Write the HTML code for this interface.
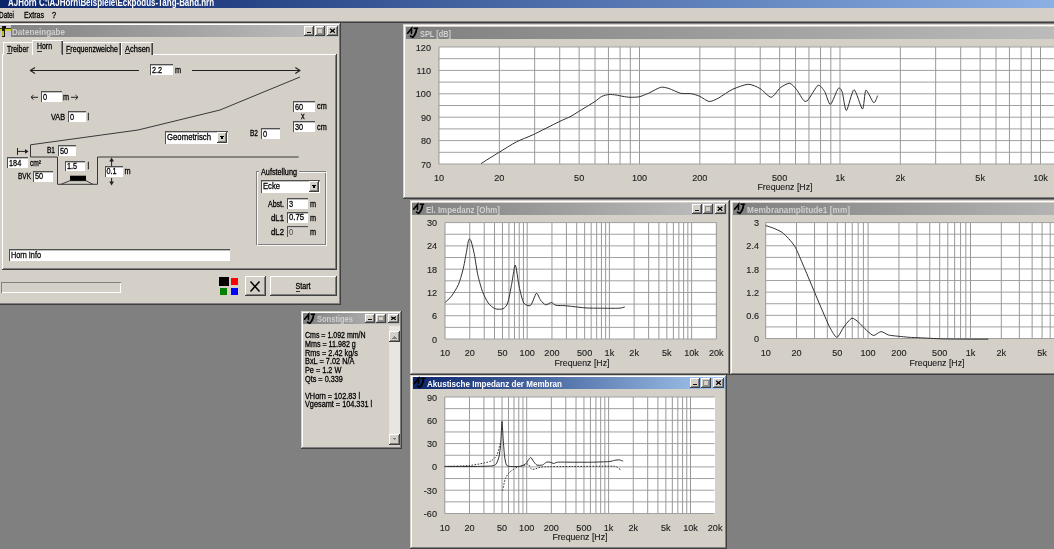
<!DOCTYPE html>
<html><head><meta charset="utf-8"><style>
html,body{margin:0;padding:0;width:1054px;height:549px;overflow:hidden;background:#808080;}

polyline,.s{shape-rendering:geometricPrecision}
text{shape-rendering:auto}
svg{will-change:transform}
</style></head><body>
<svg width="1054" height="549" viewBox="0 0 1054 549" style="display:block" shape-rendering="crispEdges"><defs><linearGradient id="ga" x1="0" x2="1" y1="0" y2="0"><stop offset="0" stop-color="#0A246A"/><stop offset="1" stop-color="#A6CAF0"/></linearGradient><linearGradient id="gi" x1="0" x2="1" y1="0" y2="0"><stop offset="0" stop-color="#808080"/><stop offset="1" stop-color="#C0C0C0"/></linearGradient><linearGradient id="gmain" gradientUnits="userSpaceOnUse" x1="0" x2="1054" y1="0" y2="0"><stop offset="0" stop-color="#0A246A"/><stop offset="1" stop-color="#8AB0E4"/></linearGradient></defs>
<rect x="0" y="0" width="1054" height="549" fill="#808080" />
<rect x="0" y="0" width="1054" height="8" fill="url(#gmain)" />
<text x="8" y="5.59" font-size="11" text-anchor="start" fill="#FFFFFF" font-weight="bold" textLength="206" lengthAdjust="spacingAndGlyphs" font-family="Liberation Sans" >AJHorn  C:\AJHorn\Beispiele\Eckpodus-Tang-Band.hrn</text>
<rect x="0" y="8" width="1054" height="14" fill="#D4D0C8" />
<text x="-1" y="17.97" font-size="8.6" text-anchor="start" fill="#000" textLength="15" lengthAdjust="spacingAndGlyphs" stroke="#000" stroke-width="0.28" font-family="Liberation Sans" >Datei</text>
<text x="24" y="17.97" font-size="8.6" text-anchor="start" fill="#000" textLength="20" lengthAdjust="spacingAndGlyphs" stroke="#000" stroke-width="0.28" font-family="Liberation Sans" >Extras</text>
<text x="52" y="17.97" font-size="8.6" text-anchor="start" fill="#000" textLength="4.1" lengthAdjust="spacingAndGlyphs" stroke="#000" stroke-width="0.28" font-family="Liberation Sans" >?</text>
<rect x="0" y="21" width="1054" height="1" fill="#808080" />
<rect x="0" y="22" width="1054" height="1" fill="#404040" />
<rect x="403" y="24" width="700" height="175" fill="#D4D0C8" />
<rect x="403" y="24" width="700" height="1" fill="#D4D0C8" />
<rect x="403" y="24" width="1" height="175" fill="#D4D0C8" />
<rect x="404" y="25" width="698" height="1" fill="#FFFFFF" />
<rect x="404" y="25" width="1" height="173" fill="#FFFFFF" />
<rect x="403" y="198" width="700" height="1" fill="#404040" />
<rect x="1102" y="24" width="1" height="175" fill="#404040" />
<rect x="404" y="197" width="698" height="1" fill="#808080" />
<rect x="1101" y="25" width="1" height="173" fill="#808080" />
<rect x="406" y="27" width="700" height="12" fill="url(#gi)" />
<g class="s" transform="translate(406,27)" fill="none" stroke="#000" stroke-linecap="round"><path d="M1.6,6.2 L5.6,1.4 L5.4,6.4" stroke-width="1.6"/><path d="M8.2,1.3 L11.6,1.3" stroke-width="1.5"/><path d="M10.6,1.6 C10.2,5 8.6,8.6 6.8,10.3 L4.6,9.3" stroke-width="1.8"/></g>
<text x="420" y="36.58" font-size="9.5" text-anchor="start" fill="#D0D0D0" font-weight="bold" textLength="31" lengthAdjust="spacingAndGlyphs" font-family="Liberation Sans" >SPL [dB]</text>
<rect x="439" y="47" width="663" height="117" fill="#FFFFFF" />
<line x1="439" y1="47.0" x2="1102" y2="47.0" stroke="#A0A0A0" stroke-width="1" class="s"/>
<line x1="439" y1="58.7" x2="1102" y2="58.7" stroke="#A0A0A0" stroke-width="1" class="s"/>
<line x1="439" y1="70.4" x2="1102" y2="70.4" stroke="#A0A0A0" stroke-width="1" class="s"/>
<line x1="439" y1="82.1" x2="1102" y2="82.1" stroke="#A0A0A0" stroke-width="1" class="s"/>
<line x1="439" y1="93.8" x2="1102" y2="93.8" stroke="#A0A0A0" stroke-width="1" class="s"/>
<line x1="439" y1="105.5" x2="1102" y2="105.5" stroke="#A0A0A0" stroke-width="1" class="s"/>
<line x1="439" y1="117.2" x2="1102" y2="117.2" stroke="#A0A0A0" stroke-width="1" class="s"/>
<line x1="439" y1="128.9" x2="1102" y2="128.9" stroke="#A0A0A0" stroke-width="1" class="s"/>
<line x1="439" y1="140.6" x2="1102" y2="140.6" stroke="#A0A0A0" stroke-width="1" class="s"/>
<line x1="439" y1="152.3" x2="1102" y2="152.3" stroke="#A0A0A0" stroke-width="1" class="s"/>
<line x1="439" y1="164.0" x2="1102" y2="164.0" stroke="#A0A0A0" stroke-width="1" class="s"/>
<line x1="439.0" y1="47" x2="439.0" y2="164" stroke="#999999" stroke-width="1" class="s"/>
<line x1="499.3565141306282" y1="47" x2="499.3565141306282" y2="164" stroke="#999999" stroke-width="1" class="s"/>
<line x1="534.6628115712923" y1="47" x2="534.6628115712923" y2="164" stroke="#999999" stroke-width="1" class="s"/>
<line x1="559.7130282612565" y1="47" x2="559.7130282612565" y2="164" stroke="#999999" stroke-width="1" class="s"/>
<line x1="579.1434858693717" y1="47" x2="579.1434858693717" y2="164" stroke="#999999" stroke-width="1" class="s"/>
<line x1="595.0193257019205" y1="47" x2="595.0193257019205" y2="164" stroke="#999999" stroke-width="1" class="s"/>
<line x1="608.4421570228585" y1="47" x2="608.4421570228585" y2="164" stroke="#999999" stroke-width="1" class="s"/>
<line x1="620.0695423918846" y1="47" x2="620.0695423918846" y2="164" stroke="#999999" stroke-width="1" class="s"/>
<line x1="630.3256231425846" y1="47" x2="630.3256231425846" y2="164" stroke="#999999" stroke-width="1" class="s"/>
<line x1="639.5" y1="47" x2="639.5" y2="164" stroke="#999999" stroke-width="1" class="s"/>
<line x1="699.8565141306283" y1="47" x2="699.8565141306283" y2="164" stroke="#999999" stroke-width="1" class="s"/>
<line x1="735.1628115712923" y1="47" x2="735.1628115712923" y2="164" stroke="#999999" stroke-width="1" class="s"/>
<line x1="760.2130282612565" y1="47" x2="760.2130282612565" y2="164" stroke="#999999" stroke-width="1" class="s"/>
<line x1="779.6434858693717" y1="47" x2="779.6434858693717" y2="164" stroke="#999999" stroke-width="1" class="s"/>
<line x1="795.5193257019205" y1="47" x2="795.5193257019205" y2="164" stroke="#999999" stroke-width="1" class="s"/>
<line x1="808.9421570228585" y1="47" x2="808.9421570228585" y2="164" stroke="#999999" stroke-width="1" class="s"/>
<line x1="820.5695423918846" y1="47" x2="820.5695423918846" y2="164" stroke="#999999" stroke-width="1" class="s"/>
<line x1="830.8256231425846" y1="47" x2="830.8256231425846" y2="164" stroke="#999999" stroke-width="1" class="s"/>
<line x1="840.0" y1="47" x2="840.0" y2="164" stroke="#999999" stroke-width="1" class="s"/>
<line x1="900.3565141306283" y1="47" x2="900.3565141306283" y2="164" stroke="#999999" stroke-width="1" class="s"/>
<line x1="935.6628115712924" y1="47" x2="935.6628115712924" y2="164" stroke="#999999" stroke-width="1" class="s"/>
<line x1="960.7130282612565" y1="47" x2="960.7130282612565" y2="164" stroke="#999999" stroke-width="1" class="s"/>
<line x1="980.1434858693717" y1="47" x2="980.1434858693717" y2="164" stroke="#999999" stroke-width="1" class="s"/>
<line x1="996.0193257019205" y1="47" x2="996.0193257019205" y2="164" stroke="#999999" stroke-width="1" class="s"/>
<line x1="1009.4421570228585" y1="47" x2="1009.4421570228585" y2="164" stroke="#999999" stroke-width="1" class="s"/>
<line x1="1021.0695423918847" y1="47" x2="1021.0695423918847" y2="164" stroke="#999999" stroke-width="1" class="s"/>
<line x1="1031.3256231425846" y1="47" x2="1031.3256231425846" y2="164" stroke="#999999" stroke-width="1" class="s"/>
<line x1="1040.5" y1="47" x2="1040.5" y2="164" stroke="#999999" stroke-width="1" class="s"/>
<line x1="1100.8565141306283" y1="47" x2="1100.8565141306283" y2="164" stroke="#999999" stroke-width="1" class="s"/>
<text x="431" y="50.54" font-size="9.1" text-anchor="end" fill="#202020" stroke="#202020" stroke-width="0.12" font-family="Liberation Sans" >120</text>
<text x="431" y="62.24" font-size="9.1" text-anchor="end" fill="#202020" stroke="#202020" stroke-width="0.12" font-family="Liberation Sans" ></text>
<text x="431" y="73.94" font-size="9.1" text-anchor="end" fill="#202020" stroke="#202020" stroke-width="0.12" font-family="Liberation Sans" >110</text>
<text x="431" y="85.64" font-size="9.1" text-anchor="end" fill="#202020" stroke="#202020" stroke-width="0.12" font-family="Liberation Sans" ></text>
<text x="431" y="97.34" font-size="9.1" text-anchor="end" fill="#202020" stroke="#202020" stroke-width="0.12" font-family="Liberation Sans" >100</text>
<text x="431" y="109.04" font-size="9.1" text-anchor="end" fill="#202020" stroke="#202020" stroke-width="0.12" font-family="Liberation Sans" ></text>
<text x="431" y="120.74" font-size="9.1" text-anchor="end" fill="#202020" stroke="#202020" stroke-width="0.12" font-family="Liberation Sans" >90</text>
<text x="431" y="132.44" font-size="9.1" text-anchor="end" fill="#202020" stroke="#202020" stroke-width="0.12" font-family="Liberation Sans" ></text>
<text x="431" y="144.14" font-size="9.1" text-anchor="end" fill="#202020" stroke="#202020" stroke-width="0.12" font-family="Liberation Sans" >80</text>
<text x="431" y="155.84" font-size="9.1" text-anchor="end" fill="#202020" stroke="#202020" stroke-width="0.12" font-family="Liberation Sans" ></text>
<text x="431" y="167.54" font-size="9.1" text-anchor="end" fill="#202020" stroke="#202020" stroke-width="0.12" font-family="Liberation Sans" >70</text>
<text x="439.0" y="180.54" font-size="9.1" text-anchor="middle" fill="#202020" stroke="#202020" stroke-width="0.12" font-family="Liberation Sans" >10</text>
<text x="499.3565141306282" y="180.54" font-size="9.1" text-anchor="middle" fill="#202020" stroke="#202020" stroke-width="0.12" font-family="Liberation Sans" >20</text>
<text x="579.1434858693717" y="180.54" font-size="9.1" text-anchor="middle" fill="#202020" stroke="#202020" stroke-width="0.12" font-family="Liberation Sans" >50</text>
<text x="639.5" y="180.54" font-size="9.1" text-anchor="middle" fill="#202020" stroke="#202020" stroke-width="0.12" font-family="Liberation Sans" >100</text>
<text x="699.8565141306283" y="180.54" font-size="9.1" text-anchor="middle" fill="#202020" stroke="#202020" stroke-width="0.12" font-family="Liberation Sans" >200</text>
<text x="779.6434858693717" y="180.54" font-size="9.1" text-anchor="middle" fill="#202020" stroke="#202020" stroke-width="0.12" font-family="Liberation Sans" >500</text>
<text x="840.0" y="180.54" font-size="9.1" text-anchor="middle" fill="#202020" stroke="#202020" stroke-width="0.12" font-family="Liberation Sans" >1k</text>
<text x="900.3565141306283" y="180.54" font-size="9.1" text-anchor="middle" fill="#202020" stroke="#202020" stroke-width="0.12" font-family="Liberation Sans" >2k</text>
<text x="980.1434858693717" y="180.54" font-size="9.1" text-anchor="middle" fill="#202020" stroke="#202020" stroke-width="0.12" font-family="Liberation Sans" >5k</text>
<text x="1040.5" y="180.54" font-size="9.1" text-anchor="middle" fill="#202020" stroke="#202020" stroke-width="0.12" font-family="Liberation Sans" >10k</text>
<text x="1100.8565141306283" y="180.54" font-size="9.1" text-anchor="middle" fill="#202020" stroke="#202020" stroke-width="0.12" font-family="Liberation Sans" >20k</text>
<text x="785" y="190.40" font-size="8.4" text-anchor="middle" fill="#202020" textLength="55" lengthAdjust="spacingAndGlyphs" stroke="#202020" stroke-width="0.12" font-family="Liberation Sans" >Frequenz [Hz]</text>
<path d="M481.0,163.6 C483.1,162.3 494.5,155.1 498.8,152.5 C503.1,149.9 512.4,143.9 516.5,141.8 C520.6,139.7 528.0,137.1 533.1,134.7 C538.2,132.3 554.6,123.9 559.1,121.7 C563.6,119.5 568.7,117.5 571.0,116.3 C573.3,115.1 575.8,113.2 578.6,111.5 C581.4,109.8 591.4,103.8 594.2,102.0 C597.0,100.2 600.0,97.3 601.8,96.4 C603.6,95.5 607.2,94.7 608.9,94.5 C610.6,94.3 614.3,94.8 616.0,95.0 C617.7,95.2 621.3,96.1 623.0,96.4 C624.7,96.7 628.3,97.3 630.2,97.3 C632.1,97.3 637.2,97.2 639.2,96.8 C641.2,96.4 645.5,94.5 646.8,94.0 C648.1,93.5 648.3,93.3 650.0,92.5 C651.7,91.7 658.4,87.8 660.7,87.3 C663.0,86.8 666.5,87.8 668.9,88.5 C671.3,89.2 678.1,92.7 680.8,93.3 C683.5,93.9 689.1,93.3 691.4,93.7 C693.7,94.1 697.6,95.4 699.7,96.3 C701.8,97.2 706.9,101.3 709.2,101.5 C711.5,101.7 715.8,99.5 718.6,98.0 C721.4,96.5 729.2,90.8 732.8,89.2 C736.4,87.6 744.9,84.4 748.2,84.3 C751.5,84.2 757.2,86.9 760.0,88.5 C762.8,90.1 768.8,97.4 771.2,97.3 C773.6,97.2 778.0,89.5 780.2,87.8 C782.4,86.1 787.6,83.1 789.6,83.3 C791.6,83.5 795.0,87.6 796.7,89.7 C798.4,91.8 802.4,99.4 803.8,100.6 C805.2,101.8 806.4,101.7 808.1,99.9 C809.8,98.1 816.0,86.4 818.0,85.4 C820.0,84.4 823.2,89.3 824.7,91.6 C826.2,93.9 828.8,104.8 830.4,104.4 C832.0,104.0 836.8,90.0 838.2,88.5 C839.6,87.0 841.2,89.5 842.2,92.1 C843.2,94.7 845.0,110.8 846.4,110.5 C847.8,110.2 852.1,89.9 854.0,89.7 C855.9,89.5 861.1,109.0 862.5,109.1 C863.9,109.2 864.6,91.0 865.9,90.2 C867.2,89.4 872.3,102.1 873.7,102.7 C875.1,103.3 877.2,96.5 877.7,95.6" fill="none" stroke="#303030" stroke-width="1.0" class="s" />
<rect x="410" y="200" width="320" height="175" fill="#D4D0C8" />
<rect x="410" y="200" width="320" height="1" fill="#D4D0C8" />
<rect x="410" y="200" width="1" height="175" fill="#D4D0C8" />
<rect x="411" y="201" width="318" height="1" fill="#FFFFFF" />
<rect x="411" y="201" width="1" height="173" fill="#FFFFFF" />
<rect x="410" y="374" width="320" height="1" fill="#404040" />
<rect x="729" y="200" width="1" height="175" fill="#404040" />
<rect x="411" y="373" width="318" height="1" fill="#808080" />
<rect x="728" y="201" width="1" height="173" fill="#808080" />
<rect x="412" y="203" width="314.5" height="12" fill="url(#gi)" />
<g class="s" transform="translate(412,203)" fill="none" stroke="#000" stroke-linecap="round"><path d="M1.6,6.2 L5.6,1.4 L5.4,6.4" stroke-width="1.6"/><path d="M8.2,1.3 L11.6,1.3" stroke-width="1.5"/><path d="M10.6,1.6 C10.2,5 8.6,8.6 6.8,10.3 L4.6,9.3" stroke-width="1.8"/></g>
<text x="426" y="212.58" font-size="9.5" text-anchor="start" fill="#D0D0D0" font-weight="bold" textLength="74" lengthAdjust="spacingAndGlyphs" font-family="Liberation Sans" >El. Impedanz [Ohm]</text>
<rect x="691.5" y="204" width="10" height="10" fill="#D4D0C8" />
<rect x="691.5" y="204" width="10" height="1" fill="#FFFFFF" />
<rect x="691.5" y="204" width="1" height="10" fill="#FFFFFF" />
<rect x="691.5" y="213" width="10" height="1" fill="#404040" />
<rect x="700.5" y="204" width="1" height="10" fill="#404040" />
<rect x="692.5" y="212" width="8" height="1" fill="#808080" />
<rect x="699.5" y="205" width="1" height="8" fill="#808080" />
<rect x="694.5" y="210" width="4" height="1.2" fill="#101010" />
<rect x="702.5" y="204" width="10" height="10" fill="#D4D0C8" />
<rect x="702.5" y="204" width="10" height="1" fill="#FFFFFF" />
<rect x="702.5" y="204" width="1" height="10" fill="#FFFFFF" />
<rect x="702.5" y="213" width="10" height="1" fill="#404040" />
<rect x="711.5" y="204" width="1" height="10" fill="#404040" />
<rect x="703.5" y="212" width="8" height="1" fill="#808080" />
<rect x="710.5" y="205" width="1" height="8" fill="#808080" />
<rect x="705.0" y="206.5" width="5" height="4.5" fill="none" stroke="#909090" stroke-width="1"/>
<rect x="714.5" y="204" width="11" height="10" fill="#D4D0C8" />
<rect x="714.5" y="204" width="11" height="1" fill="#FFFFFF" />
<rect x="714.5" y="204" width="1" height="10" fill="#FFFFFF" />
<rect x="714.5" y="213" width="11" height="1" fill="#404040" />
<rect x="724.5" y="204" width="1" height="10" fill="#404040" />
<rect x="715.5" y="212" width="9" height="1" fill="#808080" />
<rect x="723.5" y="205" width="1" height="8" fill="#808080" />
<g class="s"><line x1="717.7" y1="206.7" x2="722.3" y2="210.7" stroke="#000" stroke-width="1.3"/><line x1="722.3" y1="206.7" x2="717.7" y2="210.7" stroke="#000" stroke-width="1.3"/></g>
<rect x="445" y="222.6" width="271.29999999999995" height="116.4" fill="#FFFFFF" />
<line x1="445" y1="222.6" x2="716.3" y2="222.6" stroke="#A0A0A0" stroke-width="1" class="s"/>
<line x1="445" y1="234.24" x2="716.3" y2="234.24" stroke="#A0A0A0" stroke-width="1" class="s"/>
<line x1="445" y1="245.88" x2="716.3" y2="245.88" stroke="#A0A0A0" stroke-width="1" class="s"/>
<line x1="445" y1="257.52" x2="716.3" y2="257.52" stroke="#A0A0A0" stroke-width="1" class="s"/>
<line x1="445" y1="269.15999999999997" x2="716.3" y2="269.15999999999997" stroke="#A0A0A0" stroke-width="1" class="s"/>
<line x1="445" y1="280.8" x2="716.3" y2="280.8" stroke="#A0A0A0" stroke-width="1" class="s"/>
<line x1="445" y1="292.44" x2="716.3" y2="292.44" stroke="#A0A0A0" stroke-width="1" class="s"/>
<line x1="445" y1="304.08" x2="716.3" y2="304.08" stroke="#A0A0A0" stroke-width="1" class="s"/>
<line x1="445" y1="315.72" x2="716.3" y2="315.72" stroke="#A0A0A0" stroke-width="1" class="s"/>
<line x1="445" y1="327.36" x2="716.3" y2="327.36" stroke="#A0A0A0" stroke-width="1" class="s"/>
<line x1="445" y1="339.0" x2="716.3" y2="339.0" stroke="#A0A0A0" stroke-width="1" class="s"/>
<line x1="445.0" y1="222.6" x2="445.0" y2="339" stroke="#999999" stroke-width="1" class="s"/>
<line x1="469.74466564357925" y1="222.6" x2="469.74466564357925" y2="339" stroke="#999999" stroke-width="1" class="s"/>
<line x1="484.2193671379563" y1="222.6" x2="484.2193671379563" y2="339" stroke="#999999" stroke-width="1" class="s"/>
<line x1="494.4893312871585" y1="222.6" x2="494.4893312871585" y2="339" stroke="#999999" stroke-width="1" class="s"/>
<line x1="502.45533435642074" y1="222.6" x2="502.45533435642074" y2="339" stroke="#999999" stroke-width="1" class="s"/>
<line x1="508.9640327815355" y1="222.6" x2="508.9640327815355" y2="339" stroke="#999999" stroke-width="1" class="s"/>
<line x1="514.4670588891719" y1="222.6" x2="514.4670588891719" y2="339" stroke="#999999" stroke-width="1" class="s"/>
<line x1="519.2339969307377" y1="222.6" x2="519.2339969307377" y2="339" stroke="#999999" stroke-width="1" class="s"/>
<line x1="523.4387342759126" y1="222.6" x2="523.4387342759126" y2="339" stroke="#999999" stroke-width="1" class="s"/>
<line x1="527.2" y1="222.6" x2="527.2" y2="339" stroke="#999999" stroke-width="1" class="s"/>
<line x1="551.9446656435792" y1="222.6" x2="551.9446656435792" y2="339" stroke="#999999" stroke-width="1" class="s"/>
<line x1="566.4193671379562" y1="222.6" x2="566.4193671379562" y2="339" stroke="#999999" stroke-width="1" class="s"/>
<line x1="576.6893312871586" y1="222.6" x2="576.6893312871586" y2="339" stroke="#999999" stroke-width="1" class="s"/>
<line x1="584.6553343564208" y1="222.6" x2="584.6553343564208" y2="339" stroke="#999999" stroke-width="1" class="s"/>
<line x1="591.1640327815355" y1="222.6" x2="591.1640327815355" y2="339" stroke="#999999" stroke-width="1" class="s"/>
<line x1="596.6670588891719" y1="222.6" x2="596.6670588891719" y2="339" stroke="#999999" stroke-width="1" class="s"/>
<line x1="601.4339969307377" y1="222.6" x2="601.4339969307377" y2="339" stroke="#999999" stroke-width="1" class="s"/>
<line x1="605.6387342759125" y1="222.6" x2="605.6387342759125" y2="339" stroke="#999999" stroke-width="1" class="s"/>
<line x1="609.4" y1="222.6" x2="609.4" y2="339" stroke="#999999" stroke-width="1" class="s"/>
<line x1="634.1446656435793" y1="222.6" x2="634.1446656435793" y2="339" stroke="#999999" stroke-width="1" class="s"/>
<line x1="648.6193671379563" y1="222.6" x2="648.6193671379563" y2="339" stroke="#999999" stroke-width="1" class="s"/>
<line x1="658.8893312871585" y1="222.6" x2="658.8893312871585" y2="339" stroke="#999999" stroke-width="1" class="s"/>
<line x1="666.8553343564207" y1="222.6" x2="666.8553343564207" y2="339" stroke="#999999" stroke-width="1" class="s"/>
<line x1="673.3640327815355" y1="222.6" x2="673.3640327815355" y2="339" stroke="#999999" stroke-width="1" class="s"/>
<line x1="678.8670588891719" y1="222.6" x2="678.8670588891719" y2="339" stroke="#999999" stroke-width="1" class="s"/>
<line x1="683.6339969307378" y1="222.6" x2="683.6339969307378" y2="339" stroke="#999999" stroke-width="1" class="s"/>
<line x1="687.8387342759125" y1="222.6" x2="687.8387342759125" y2="339" stroke="#999999" stroke-width="1" class="s"/>
<line x1="691.6" y1="222.6" x2="691.6" y2="339" stroke="#999999" stroke-width="1" class="s"/>
<line x1="716.3446656435792" y1="222.6" x2="716.3446656435792" y2="339" stroke="#999999" stroke-width="1" class="s"/>
<text x="437" y="226.14" font-size="9.1" text-anchor="end" fill="#202020" stroke="#202020" stroke-width="0.12" font-family="Liberation Sans" >30</text>
<text x="437" y="237.78" font-size="9.1" text-anchor="end" fill="#202020" stroke="#202020" stroke-width="0.12" font-family="Liberation Sans" ></text>
<text x="437" y="249.42" font-size="9.1" text-anchor="end" fill="#202020" stroke="#202020" stroke-width="0.12" font-family="Liberation Sans" >24</text>
<text x="437" y="261.06" font-size="9.1" text-anchor="end" fill="#202020" stroke="#202020" stroke-width="0.12" font-family="Liberation Sans" ></text>
<text x="437" y="272.70" font-size="9.1" text-anchor="end" fill="#202020" stroke="#202020" stroke-width="0.12" font-family="Liberation Sans" >18</text>
<text x="437" y="284.34" font-size="9.1" text-anchor="end" fill="#202020" stroke="#202020" stroke-width="0.12" font-family="Liberation Sans" ></text>
<text x="437" y="295.98" font-size="9.1" text-anchor="end" fill="#202020" stroke="#202020" stroke-width="0.12" font-family="Liberation Sans" >12</text>
<text x="437" y="307.62" font-size="9.1" text-anchor="end" fill="#202020" stroke="#202020" stroke-width="0.12" font-family="Liberation Sans" ></text>
<text x="437" y="319.26" font-size="9.1" text-anchor="end" fill="#202020" stroke="#202020" stroke-width="0.12" font-family="Liberation Sans" >6</text>
<text x="437" y="330.90" font-size="9.1" text-anchor="end" fill="#202020" stroke="#202020" stroke-width="0.12" font-family="Liberation Sans" ></text>
<text x="437" y="342.54" font-size="9.1" text-anchor="end" fill="#202020" stroke="#202020" stroke-width="0.12" font-family="Liberation Sans" >0</text>
<text x="445.0" y="355.54" font-size="9.1" text-anchor="middle" fill="#202020" stroke="#202020" stroke-width="0.12" font-family="Liberation Sans" >10</text>
<text x="469.74466564357925" y="355.54" font-size="9.1" text-anchor="middle" fill="#202020" stroke="#202020" stroke-width="0.12" font-family="Liberation Sans" >20</text>
<text x="502.45533435642074" y="355.54" font-size="9.1" text-anchor="middle" fill="#202020" stroke="#202020" stroke-width="0.12" font-family="Liberation Sans" >50</text>
<text x="527.2" y="355.54" font-size="9.1" text-anchor="middle" fill="#202020" stroke="#202020" stroke-width="0.12" font-family="Liberation Sans" >100</text>
<text x="551.9446656435792" y="355.54" font-size="9.1" text-anchor="middle" fill="#202020" stroke="#202020" stroke-width="0.12" font-family="Liberation Sans" >200</text>
<text x="584.6553343564208" y="355.54" font-size="9.1" text-anchor="middle" fill="#202020" stroke="#202020" stroke-width="0.12" font-family="Liberation Sans" >500</text>
<text x="609.4" y="355.54" font-size="9.1" text-anchor="middle" fill="#202020" stroke="#202020" stroke-width="0.12" font-family="Liberation Sans" >1k</text>
<text x="634.1446656435793" y="355.54" font-size="9.1" text-anchor="middle" fill="#202020" stroke="#202020" stroke-width="0.12" font-family="Liberation Sans" >2k</text>
<text x="666.8553343564207" y="355.54" font-size="9.1" text-anchor="middle" fill="#202020" stroke="#202020" stroke-width="0.12" font-family="Liberation Sans" >5k</text>
<text x="691.6" y="355.54" font-size="9.1" text-anchor="middle" fill="#202020" stroke="#202020" stroke-width="0.12" font-family="Liberation Sans" >10k</text>
<text x="716.3446656435792" y="355.54" font-size="9.1" text-anchor="middle" fill="#202020" stroke="#202020" stroke-width="0.12" font-family="Liberation Sans" >20k</text>
<text x="582" y="365.90" font-size="8.4" text-anchor="middle" fill="#202020" textLength="55" lengthAdjust="spacingAndGlyphs" stroke="#202020" stroke-width="0.12" font-family="Liberation Sans" >Frequenz [Hz]</text>
<path d="M445.1,302.5 C445.9,301.7 449.9,298.2 451.5,296.1 C453.1,294.0 457.0,287.8 458.4,284.6 C459.8,281.4 462.0,273.6 463.0,269.7 C464.0,265.8 465.7,256.0 466.4,252.4 C467.1,248.8 468.1,241.2 468.7,239.8 C469.3,238.4 470.3,239.2 471.0,241.0 C471.7,242.8 473.6,250.6 474.4,254.7 C475.2,258.8 476.9,271.0 477.9,275.4 C478.9,279.8 481.3,288.2 482.5,291.5 C483.7,294.8 486.7,300.9 488.2,303.0 C489.7,305.1 493.3,308.0 495.1,308.7 C496.9,309.4 501.6,309.4 503.1,308.7 C504.6,308.0 506.7,305.9 507.7,303.0 C508.7,300.1 510.7,289.1 511.6,284.6 C512.5,280.1 514.4,264.8 515.3,265.1 C516.2,265.4 518.2,282.4 519.2,286.9 C520.2,291.4 522.4,300.8 523.8,303.0 C525.2,305.2 529.2,306.5 530.7,305.3 C532.2,304.1 535.2,293.9 536.4,293.3 C537.6,292.7 539.5,298.8 540.6,300.2 C541.7,301.6 544.3,304.5 545.6,304.8 C546.9,305.1 550.2,302.4 551.4,302.5 C552.6,302.6 554.4,304.9 556.0,305.3 C557.6,305.7 562.5,305.5 565.1,305.7 C567.7,305.9 575.2,306.8 577.8,307.1 C580.4,307.4 584.3,307.9 587.0,308.0 C589.7,308.1 596.8,308.2 600.7,308.2 C604.6,308.2 616.2,308.4 619.1,308.2 C622.0,308.0 624.1,307.1 624.8,306.9" fill="none" stroke="#303030" stroke-width="1.0" class="s" />
<rect x="730" y="200" width="400" height="175" fill="#D4D0C8" />
<rect x="730" y="200" width="400" height="1" fill="#D4D0C8" />
<rect x="730" y="200" width="1" height="175" fill="#D4D0C8" />
<rect x="731" y="201" width="398" height="1" fill="#FFFFFF" />
<rect x="731" y="201" width="1" height="173" fill="#FFFFFF" />
<rect x="730" y="374" width="400" height="1" fill="#404040" />
<rect x="1129" y="200" width="1" height="175" fill="#404040" />
<rect x="731" y="373" width="398" height="1" fill="#808080" />
<rect x="1128" y="201" width="1" height="173" fill="#808080" />
<rect x="733" y="203" width="400" height="12" fill="url(#gi)" />
<g class="s" transform="translate(733,203)" fill="none" stroke="#000" stroke-linecap="round"><path d="M1.6,6.2 L5.6,1.4 L5.4,6.4" stroke-width="1.6"/><path d="M8.2,1.3 L11.6,1.3" stroke-width="1.5"/><path d="M10.6,1.6 C10.2,5 8.6,8.6 6.8,10.3 L4.6,9.3" stroke-width="1.8"/></g>
<text x="747" y="212.58" font-size="9.5" text-anchor="start" fill="#D0D0D0" font-weight="bold" textLength="103" lengthAdjust="spacingAndGlyphs" font-family="Liberation Sans" >Membranamplitude1 [mm]</text>
<rect x="765.7" y="222.6" width="337.29999999999995" height="115.9" fill="#FFFFFF" />
<line x1="765.7" y1="222.6" x2="1103" y2="222.6" stroke="#A0A0A0" stroke-width="1" class="s"/>
<line x1="765.7" y1="234.19" x2="1103" y2="234.19" stroke="#A0A0A0" stroke-width="1" class="s"/>
<line x1="765.7" y1="245.78" x2="1103" y2="245.78" stroke="#A0A0A0" stroke-width="1" class="s"/>
<line x1="765.7" y1="257.37" x2="1103" y2="257.37" stroke="#A0A0A0" stroke-width="1" class="s"/>
<line x1="765.7" y1="268.96" x2="1103" y2="268.96" stroke="#A0A0A0" stroke-width="1" class="s"/>
<line x1="765.7" y1="280.55" x2="1103" y2="280.55" stroke="#A0A0A0" stroke-width="1" class="s"/>
<line x1="765.7" y1="292.14" x2="1103" y2="292.14" stroke="#A0A0A0" stroke-width="1" class="s"/>
<line x1="765.7" y1="303.73" x2="1103" y2="303.73" stroke="#A0A0A0" stroke-width="1" class="s"/>
<line x1="765.7" y1="315.32" x2="1103" y2="315.32" stroke="#A0A0A0" stroke-width="1" class="s"/>
<line x1="765.7" y1="326.91" x2="1103" y2="326.91" stroke="#A0A0A0" stroke-width="1" class="s"/>
<line x1="765.7" y1="338.5" x2="1103" y2="338.5" stroke="#A0A0A0" stroke-width="1" class="s"/>
<line x1="765.7" y1="222.6" x2="765.7" y2="338.5" stroke="#999999" stroke-width="1" class="s"/>
<line x1="796.5254715559918" y1="222.6" x2="796.5254715559918" y2="338.5" stroke="#999999" stroke-width="1" class="s"/>
<line x1="814.5572164832935" y1="222.6" x2="814.5572164832935" y2="338.5" stroke="#999999" stroke-width="1" class="s"/>
<line x1="827.3509431119834" y1="222.6" x2="827.3509431119834" y2="338.5" stroke="#999999" stroke-width="1" class="s"/>
<line x1="837.2745284440084" y1="222.6" x2="837.2745284440084" y2="338.5" stroke="#999999" stroke-width="1" class="s"/>
<line x1="845.3826880392852" y1="222.6" x2="845.3826880392852" y2="338.5" stroke="#999999" stroke-width="1" class="s"/>
<line x1="852.23803929746" y1="222.6" x2="852.23803929746" y2="338.5" stroke="#999999" stroke-width="1" class="s"/>
<line x1="858.1764146679751" y1="222.6" x2="858.1764146679751" y2="338.5" stroke="#999999" stroke-width="1" class="s"/>
<line x1="863.4144329665869" y1="222.6" x2="863.4144329665869" y2="338.5" stroke="#999999" stroke-width="1" class="s"/>
<line x1="868.1" y1="222.6" x2="868.1" y2="338.5" stroke="#999999" stroke-width="1" class="s"/>
<line x1="898.9254715559917" y1="222.6" x2="898.9254715559917" y2="338.5" stroke="#999999" stroke-width="1" class="s"/>
<line x1="916.9572164832935" y1="222.6" x2="916.9572164832935" y2="338.5" stroke="#999999" stroke-width="1" class="s"/>
<line x1="929.7509431119834" y1="222.6" x2="929.7509431119834" y2="338.5" stroke="#999999" stroke-width="1" class="s"/>
<line x1="939.6745284440084" y1="222.6" x2="939.6745284440084" y2="338.5" stroke="#999999" stroke-width="1" class="s"/>
<line x1="947.7826880392852" y1="222.6" x2="947.7826880392852" y2="338.5" stroke="#999999" stroke-width="1" class="s"/>
<line x1="954.63803929746" y1="222.6" x2="954.63803929746" y2="338.5" stroke="#999999" stroke-width="1" class="s"/>
<line x1="960.5764146679751" y1="222.6" x2="960.5764146679751" y2="338.5" stroke="#999999" stroke-width="1" class="s"/>
<line x1="965.8144329665869" y1="222.6" x2="965.8144329665869" y2="338.5" stroke="#999999" stroke-width="1" class="s"/>
<line x1="970.5" y1="222.6" x2="970.5" y2="338.5" stroke="#999999" stroke-width="1" class="s"/>
<line x1="1001.3254715559917" y1="222.6" x2="1001.3254715559917" y2="338.5" stroke="#999999" stroke-width="1" class="s"/>
<line x1="1019.3572164832935" y1="222.6" x2="1019.3572164832935" y2="338.5" stroke="#999999" stroke-width="1" class="s"/>
<line x1="1032.1509431119835" y1="222.6" x2="1032.1509431119835" y2="338.5" stroke="#999999" stroke-width="1" class="s"/>
<line x1="1042.0745284440084" y1="222.6" x2="1042.0745284440084" y2="338.5" stroke="#999999" stroke-width="1" class="s"/>
<line x1="1050.182688039285" y1="222.6" x2="1050.182688039285" y2="338.5" stroke="#999999" stroke-width="1" class="s"/>
<line x1="1057.03803929746" y1="222.6" x2="1057.03803929746" y2="338.5" stroke="#999999" stroke-width="1" class="s"/>
<line x1="1062.9764146679752" y1="222.6" x2="1062.9764146679752" y2="338.5" stroke="#999999" stroke-width="1" class="s"/>
<line x1="1068.2144329665869" y1="222.6" x2="1068.2144329665869" y2="338.5" stroke="#999999" stroke-width="1" class="s"/>
<line x1="1072.9" y1="222.6" x2="1072.9" y2="338.5" stroke="#999999" stroke-width="1" class="s"/>
<text x="759" y="226.14" font-size="9.1" text-anchor="end" fill="#202020" stroke="#202020" stroke-width="0.12" font-family="Liberation Sans" >3</text>
<text x="759" y="237.73" font-size="9.1" text-anchor="end" fill="#202020" stroke="#202020" stroke-width="0.12" font-family="Liberation Sans" ></text>
<text x="759" y="249.32" font-size="9.1" text-anchor="end" fill="#202020" stroke="#202020" stroke-width="0.12" font-family="Liberation Sans" >2.4</text>
<text x="759" y="260.91" font-size="9.1" text-anchor="end" fill="#202020" stroke="#202020" stroke-width="0.12" font-family="Liberation Sans" ></text>
<text x="759" y="272.50" font-size="9.1" text-anchor="end" fill="#202020" stroke="#202020" stroke-width="0.12" font-family="Liberation Sans" >1.8</text>
<text x="759" y="284.09" font-size="9.1" text-anchor="end" fill="#202020" stroke="#202020" stroke-width="0.12" font-family="Liberation Sans" ></text>
<text x="759" y="295.68" font-size="9.1" text-anchor="end" fill="#202020" stroke="#202020" stroke-width="0.12" font-family="Liberation Sans" >1.2</text>
<text x="759" y="307.27" font-size="9.1" text-anchor="end" fill="#202020" stroke="#202020" stroke-width="0.12" font-family="Liberation Sans" ></text>
<text x="759" y="318.86" font-size="9.1" text-anchor="end" fill="#202020" stroke="#202020" stroke-width="0.12" font-family="Liberation Sans" >0.6</text>
<text x="759" y="330.45" font-size="9.1" text-anchor="end" fill="#202020" stroke="#202020" stroke-width="0.12" font-family="Liberation Sans" ></text>
<text x="759" y="342.04" font-size="9.1" text-anchor="end" fill="#202020" stroke="#202020" stroke-width="0.12" font-family="Liberation Sans" >0</text>
<text x="765.7" y="355.54" font-size="9.1" text-anchor="middle" fill="#202020" stroke="#202020" stroke-width="0.12" font-family="Liberation Sans" >10</text>
<text x="796.5254715559918" y="355.54" font-size="9.1" text-anchor="middle" fill="#202020" stroke="#202020" stroke-width="0.12" font-family="Liberation Sans" >20</text>
<text x="837.2745284440084" y="355.54" font-size="9.1" text-anchor="middle" fill="#202020" stroke="#202020" stroke-width="0.12" font-family="Liberation Sans" >50</text>
<text x="868.1" y="355.54" font-size="9.1" text-anchor="middle" fill="#202020" stroke="#202020" stroke-width="0.12" font-family="Liberation Sans" >100</text>
<text x="898.9254715559917" y="355.54" font-size="9.1" text-anchor="middle" fill="#202020" stroke="#202020" stroke-width="0.12" font-family="Liberation Sans" >200</text>
<text x="939.6745284440084" y="355.54" font-size="9.1" text-anchor="middle" fill="#202020" stroke="#202020" stroke-width="0.12" font-family="Liberation Sans" >500</text>
<text x="970.5" y="355.54" font-size="9.1" text-anchor="middle" fill="#202020" stroke="#202020" stroke-width="0.12" font-family="Liberation Sans" >1k</text>
<text x="1001.3254715559917" y="355.54" font-size="9.1" text-anchor="middle" fill="#202020" stroke="#202020" stroke-width="0.12" font-family="Liberation Sans" >2k</text>
<text x="1042.0745284440084" y="355.54" font-size="9.1" text-anchor="middle" fill="#202020" stroke="#202020" stroke-width="0.12" font-family="Liberation Sans" >5k</text>
<text x="1072.9" y="355.54" font-size="9.1" text-anchor="middle" fill="#202020" stroke="#202020" stroke-width="0.12" font-family="Liberation Sans" >10k</text>
<text x="1103.7254715559918" y="355.54" font-size="9.1" text-anchor="middle" fill="#202020" stroke="#202020" stroke-width="0.12" font-family="Liberation Sans" >20k</text>
<text x="937" y="365.90" font-size="8.4" text-anchor="middle" fill="#202020" textLength="55" lengthAdjust="spacingAndGlyphs" stroke="#202020" stroke-width="0.12" font-family="Liberation Sans" >Frequenz [Hz]</text>
<path d="M765.7,225.6 C766.7,225.9 771.9,227.5 773.8,228.3 C775.7,229.1 780.0,231.0 781.8,232.2 C783.6,233.4 787.0,236.8 788.7,238.7 C790.4,240.6 793.8,244.5 795.6,247.8 C797.4,251.1 801.5,261.4 803.6,266.2 C805.7,271.0 810.6,282.8 812.8,288.0 C815.0,293.2 819.9,305.0 822.0,309.8 C824.1,314.6 828.2,324.4 830.0,327.7 C831.8,331.0 835.2,337.4 836.9,337.3 C838.6,337.2 842.0,329.3 843.8,327.0 C845.6,324.7 850.0,318.9 851.8,318.3 C853.6,317.7 856.9,320.9 858.7,322.4 C860.5,323.9 864.9,328.8 866.7,330.4 C868.5,332.0 871.9,335.4 873.6,335.5 C875.3,335.6 879.1,331.7 880.9,331.6 C882.7,331.5 886.5,334.4 888.5,335.0 C890.5,335.6 895.2,335.9 897.7,336.2 C900.2,336.5 906.5,337.1 909.2,337.3 C911.9,337.5 916.5,337.6 920.6,337.8 C924.7,338.0 935.5,338.7 943.6,338.9 C951.7,339.1 982.9,339.2 988.3,339.2" fill="none" stroke="#303030" stroke-width="1.0" class="s" />
<rect x="410" y="375" width="317" height="174" fill="#D4D0C8" />
<rect x="410" y="375" width="317" height="1" fill="#D4D0C8" />
<rect x="410" y="375" width="1" height="174" fill="#D4D0C8" />
<rect x="411" y="376" width="315" height="1" fill="#FFFFFF" />
<rect x="411" y="376" width="1" height="172" fill="#FFFFFF" />
<rect x="410" y="548" width="317" height="1" fill="#404040" />
<rect x="726" y="375" width="1" height="174" fill="#404040" />
<rect x="411" y="547" width="315" height="1" fill="#808080" />
<rect x="725" y="376" width="1" height="172" fill="#808080" />
<rect x="413" y="377" width="312" height="12" fill="url(#ga)" />
<g class="s" transform="translate(413,377)" fill="none" stroke="#000" stroke-linecap="round"><path d="M1.6,6.2 L5.6,1.4 L5.4,6.4" stroke-width="1.6"/><path d="M8.2,1.3 L11.6,1.3" stroke-width="1.5"/><path d="M10.6,1.6 C10.2,5 8.6,8.6 6.8,10.3 L4.6,9.3" stroke-width="1.8"/></g>
<text x="427" y="386.58" font-size="9.5" text-anchor="start" fill="#FFFFFF" font-weight="bold" textLength="135" lengthAdjust="spacingAndGlyphs" font-family="Liberation Sans" >Akustische Impedanz der Membran</text>
<rect x="690" y="378" width="10" height="10" fill="#D4D0C8" />
<rect x="690" y="378" width="10" height="1" fill="#FFFFFF" />
<rect x="690" y="378" width="1" height="10" fill="#FFFFFF" />
<rect x="690" y="387" width="10" height="1" fill="#404040" />
<rect x="699" y="378" width="1" height="10" fill="#404040" />
<rect x="691" y="386" width="8" height="1" fill="#808080" />
<rect x="698" y="379" width="1" height="8" fill="#808080" />
<rect x="693" y="384" width="4" height="1.2" fill="#101010" />
<rect x="701" y="378" width="10" height="10" fill="#D4D0C8" />
<rect x="701" y="378" width="10" height="1" fill="#FFFFFF" />
<rect x="701" y="378" width="1" height="10" fill="#FFFFFF" />
<rect x="701" y="387" width="10" height="1" fill="#404040" />
<rect x="710" y="378" width="1" height="10" fill="#404040" />
<rect x="702" y="386" width="8" height="1" fill="#808080" />
<rect x="709" y="379" width="1" height="8" fill="#808080" />
<rect x="703.5" y="380.5" width="5" height="4.5" fill="none" stroke="#909090" stroke-width="1"/>
<rect x="713" y="378" width="11" height="10" fill="#D4D0C8" />
<rect x="713" y="378" width="11" height="1" fill="#FFFFFF" />
<rect x="713" y="378" width="1" height="10" fill="#FFFFFF" />
<rect x="713" y="387" width="11" height="1" fill="#404040" />
<rect x="723" y="378" width="1" height="10" fill="#404040" />
<rect x="714" y="386" width="9" height="1" fill="#808080" />
<rect x="722" y="379" width="1" height="8" fill="#808080" />
<g class="s"><line x1="716.2" y1="380.7" x2="720.8" y2="384.7" stroke="#000" stroke-width="1.3"/><line x1="720.8" y1="380.7" x2="716.2" y2="384.7" stroke="#000" stroke-width="1.3"/></g>
<rect x="444.8" y="397" width="269.7" height="116.5" fill="#FFFFFF" />
<line x1="444.8" y1="397.0" x2="714.5" y2="397.0" stroke="#A0A0A0" stroke-width="1" class="s"/>
<line x1="444.8" y1="408.65" x2="714.5" y2="408.65" stroke="#A0A0A0" stroke-width="1" class="s"/>
<line x1="444.8" y1="420.3" x2="714.5" y2="420.3" stroke="#A0A0A0" stroke-width="1" class="s"/>
<line x1="444.8" y1="431.95" x2="714.5" y2="431.95" stroke="#A0A0A0" stroke-width="1" class="s"/>
<line x1="444.8" y1="443.6" x2="714.5" y2="443.6" stroke="#A0A0A0" stroke-width="1" class="s"/>
<line x1="444.8" y1="455.25" x2="714.5" y2="455.25" stroke="#A0A0A0" stroke-width="1" class="s"/>
<line x1="444.8" y1="466.9" x2="714.5" y2="466.9" stroke="#A0A0A0" stroke-width="1" class="s"/>
<line x1="444.8" y1="478.55" x2="714.5" y2="478.55" stroke="#A0A0A0" stroke-width="1" class="s"/>
<line x1="444.8" y1="490.2" x2="714.5" y2="490.2" stroke="#A0A0A0" stroke-width="1" class="s"/>
<line x1="444.8" y1="501.85" x2="714.5" y2="501.85" stroke="#A0A0A0" stroke-width="1" class="s"/>
<line x1="444.8" y1="513.5" x2="714.5" y2="513.5" stroke="#A0A0A0" stroke-width="1" class="s"/>
<line x1="444.8" y1="397" x2="444.8" y2="513.5" stroke="#999999" stroke-width="1" class="s"/>
<line x1="469.4543566448801" y1="397" x2="469.4543566448801" y2="513.5" stroke="#999999" stroke-width="1" class="s"/>
<line x1="483.87623076154034" y1="397" x2="483.87623076154034" y2="513.5" stroke="#999999" stroke-width="1" class="s"/>
<line x1="494.10871328976015" y1="397" x2="494.10871328976015" y2="513.5" stroke="#999999" stroke-width="1" class="s"/>
<line x1="502.04564335512" y1="397" x2="502.04564335512" y2="513.5" stroke="#999999" stroke-width="1" class="s"/>
<line x1="508.5305874064204" y1="397" x2="508.5305874064204" y2="513.5" stroke="#999999" stroke-width="1" class="s"/>
<line x1="514.0135294771676" y1="397" x2="514.0135294771676" y2="513.5" stroke="#999999" stroke-width="1" class="s"/>
<line x1="518.7630699346402" y1="397" x2="518.7630699346402" y2="513.5" stroke="#999999" stroke-width="1" class="s"/>
<line x1="522.9524615230807" y1="397" x2="522.9524615230807" y2="513.5" stroke="#999999" stroke-width="1" class="s"/>
<line x1="526.7" y1="397" x2="526.7" y2="513.5" stroke="#999999" stroke-width="1" class="s"/>
<line x1="551.3543566448801" y1="397" x2="551.3543566448801" y2="513.5" stroke="#999999" stroke-width="1" class="s"/>
<line x1="565.7762307615403" y1="397" x2="565.7762307615403" y2="513.5" stroke="#999999" stroke-width="1" class="s"/>
<line x1="576.0087132897602" y1="397" x2="576.0087132897602" y2="513.5" stroke="#999999" stroke-width="1" class="s"/>
<line x1="583.94564335512" y1="397" x2="583.94564335512" y2="513.5" stroke="#999999" stroke-width="1" class="s"/>
<line x1="590.4305874064205" y1="397" x2="590.4305874064205" y2="513.5" stroke="#999999" stroke-width="1" class="s"/>
<line x1="595.9135294771677" y1="397" x2="595.9135294771677" y2="513.5" stroke="#999999" stroke-width="1" class="s"/>
<line x1="600.6630699346401" y1="397" x2="600.6630699346401" y2="513.5" stroke="#999999" stroke-width="1" class="s"/>
<line x1="604.8524615230807" y1="397" x2="604.8524615230807" y2="513.5" stroke="#999999" stroke-width="1" class="s"/>
<line x1="608.6" y1="397" x2="608.6" y2="513.5" stroke="#999999" stroke-width="1" class="s"/>
<line x1="633.2543566448801" y1="397" x2="633.2543566448801" y2="513.5" stroke="#999999" stroke-width="1" class="s"/>
<line x1="647.6762307615404" y1="397" x2="647.6762307615404" y2="513.5" stroke="#999999" stroke-width="1" class="s"/>
<line x1="657.9087132897602" y1="397" x2="657.9087132897602" y2="513.5" stroke="#999999" stroke-width="1" class="s"/>
<line x1="665.8456433551199" y1="397" x2="665.8456433551199" y2="513.5" stroke="#999999" stroke-width="1" class="s"/>
<line x1="672.3305874064204" y1="397" x2="672.3305874064204" y2="513.5" stroke="#999999" stroke-width="1" class="s"/>
<line x1="677.8135294771677" y1="397" x2="677.8135294771677" y2="513.5" stroke="#999999" stroke-width="1" class="s"/>
<line x1="682.5630699346402" y1="397" x2="682.5630699346402" y2="513.5" stroke="#999999" stroke-width="1" class="s"/>
<line x1="686.7524615230807" y1="397" x2="686.7524615230807" y2="513.5" stroke="#999999" stroke-width="1" class="s"/>
<line x1="690.5" y1="397" x2="690.5" y2="513.5" stroke="#999999" stroke-width="1" class="s"/>
<text x="437" y="400.54" font-size="9.1" text-anchor="end" fill="#202020" stroke="#202020" stroke-width="0.12" font-family="Liberation Sans" >90</text>
<text x="437" y="412.19" font-size="9.1" text-anchor="end" fill="#202020" stroke="#202020" stroke-width="0.12" font-family="Liberation Sans" ></text>
<text x="437" y="423.84" font-size="9.1" text-anchor="end" fill="#202020" stroke="#202020" stroke-width="0.12" font-family="Liberation Sans" >60</text>
<text x="437" y="435.49" font-size="9.1" text-anchor="end" fill="#202020" stroke="#202020" stroke-width="0.12" font-family="Liberation Sans" ></text>
<text x="437" y="447.14" font-size="9.1" text-anchor="end" fill="#202020" stroke="#202020" stroke-width="0.12" font-family="Liberation Sans" >30</text>
<text x="437" y="458.79" font-size="9.1" text-anchor="end" fill="#202020" stroke="#202020" stroke-width="0.12" font-family="Liberation Sans" ></text>
<text x="437" y="470.44" font-size="9.1" text-anchor="end" fill="#202020" stroke="#202020" stroke-width="0.12" font-family="Liberation Sans" >0</text>
<text x="437" y="482.09" font-size="9.1" text-anchor="end" fill="#202020" stroke="#202020" stroke-width="0.12" font-family="Liberation Sans" ></text>
<text x="437" y="493.74" font-size="9.1" text-anchor="end" fill="#202020" stroke="#202020" stroke-width="0.12" font-family="Liberation Sans" >-30</text>
<text x="437" y="505.39" font-size="9.1" text-anchor="end" fill="#202020" stroke="#202020" stroke-width="0.12" font-family="Liberation Sans" ></text>
<text x="437" y="517.04" font-size="9.1" text-anchor="end" fill="#202020" stroke="#202020" stroke-width="0.12" font-family="Liberation Sans" >-60</text>
<text x="444.8" y="530.94" font-size="9.1" text-anchor="middle" fill="#202020" stroke="#202020" stroke-width="0.12" font-family="Liberation Sans" >10</text>
<text x="469.4543566448801" y="530.94" font-size="9.1" text-anchor="middle" fill="#202020" stroke="#202020" stroke-width="0.12" font-family="Liberation Sans" >20</text>
<text x="502.04564335512" y="530.94" font-size="9.1" text-anchor="middle" fill="#202020" stroke="#202020" stroke-width="0.12" font-family="Liberation Sans" >50</text>
<text x="526.7" y="530.94" font-size="9.1" text-anchor="middle" fill="#202020" stroke="#202020" stroke-width="0.12" font-family="Liberation Sans" >100</text>
<text x="551.3543566448801" y="530.94" font-size="9.1" text-anchor="middle" fill="#202020" stroke="#202020" stroke-width="0.12" font-family="Liberation Sans" >200</text>
<text x="583.94564335512" y="530.94" font-size="9.1" text-anchor="middle" fill="#202020" stroke="#202020" stroke-width="0.12" font-family="Liberation Sans" >500</text>
<text x="608.6" y="530.94" font-size="9.1" text-anchor="middle" fill="#202020" stroke="#202020" stroke-width="0.12" font-family="Liberation Sans" >1k</text>
<text x="633.2543566448801" y="530.94" font-size="9.1" text-anchor="middle" fill="#202020" stroke="#202020" stroke-width="0.12" font-family="Liberation Sans" >2k</text>
<text x="665.8456433551199" y="530.94" font-size="9.1" text-anchor="middle" fill="#202020" stroke="#202020" stroke-width="0.12" font-family="Liberation Sans" >5k</text>
<text x="690.5" y="530.94" font-size="9.1" text-anchor="middle" fill="#202020" stroke="#202020" stroke-width="0.12" font-family="Liberation Sans" >10k</text>
<text x="715.1543566448801" y="530.94" font-size="9.1" text-anchor="middle" fill="#202020" stroke="#202020" stroke-width="0.12" font-family="Liberation Sans" >20k</text>
<text x="580" y="539.90" font-size="8.4" text-anchor="middle" fill="#202020" textLength="55" lengthAdjust="spacingAndGlyphs" stroke="#202020" stroke-width="0.12" font-family="Liberation Sans" >Frequenz [Hz]</text>
<path d="M444.7,466.4 C447.6,466.4 462.9,466.5 468.5,466.5 C474.1,466.5 487.9,466.3 491.2,466.0 C494.5,465.7 495.1,465.1 496.0,464.1 C496.9,463.1 498.3,459.3 498.8,457.4 C499.3,455.5 500.0,450.5 500.3,448.0 C500.6,445.5 500.9,439.8 501.1,436.6 C501.3,433.4 501.8,421.4 502.0,421.4 C502.2,421.4 502.7,432.5 503.0,436.6 C503.3,440.7 504.1,452.1 504.5,455.5 C504.9,458.9 505.7,463.7 506.4,465.0 C507.1,466.3 508.6,466.2 510.2,466.4 C511.8,466.6 517.9,466.7 519.7,466.4 C521.5,466.1 524.4,464.8 525.4,464.1 C526.4,463.4 527.6,461.1 528.2,460.3 C528.8,459.5 530.1,457.3 530.7,457.4 C531.3,457.5 532.7,460.3 533.4,461.2 C534.1,462.1 535.7,464.5 536.8,465.0 C537.9,465.5 541.4,465.3 542.5,465.0 C543.6,464.7 545.4,462.5 546.3,462.2 C547.2,461.9 549.2,462.0 550.1,462.2 C551.0,462.4 553.0,463.5 553.9,463.5 C554.8,463.5 555.3,462.4 557.6,462.2 C559.9,462.0 568.7,462.2 572.8,462.2 C576.9,462.2 587.5,462.3 591.8,462.2 C596.1,462.1 606.2,461.8 608.9,461.6 C611.6,461.4 613.4,460.5 614.6,460.3 C615.8,460.1 618.3,459.8 619.3,459.9 C620.3,460.0 622.6,461.0 623.1,461.2" fill="none" stroke="#303030" stroke-width="1.0" class="s" />
<path d="M444.7,466.5 C447.6,466.4 463.8,466.0 468.5,465.6 C473.2,465.2 480.9,463.7 483.6,463.1 C486.3,462.5 489.6,461.8 491.2,460.9 C492.8,460.0 495.8,457.3 496.9,455.2 C498.0,453.1 499.9,444.6 500.3,443.2" fill="none" stroke="#303030" stroke-width="1.0" class="s" stroke-dasharray="1.5,1.5"/>
<path d="M502.6,490.6 C502.9,489.1 504.6,480.6 505.5,478.3 C506.4,476.0 508.7,473.1 510.2,471.7 C511.7,470.3 516.2,467.6 517.8,466.9 C519.4,466.2 522.3,465.9 523.5,465.6 C524.7,465.3 527.3,463.7 528.2,464.1 C529.1,464.5 530.3,468.2 531.1,468.8 C531.9,469.4 533.5,469.4 534.9,469.2 C536.3,469.0 538.0,467.2 542.5,466.9 C547.0,466.6 564.6,466.6 572.8,466.5 C581.0,466.4 605.6,466.2 610.8,466.2 C616.0,466.2 615.3,466.4 616.5,466.9 C617.7,467.4 620.6,469.9 621.2,470.3" fill="none" stroke="#303030" stroke-width="1.0" class="s" stroke-dasharray="1.5,1.5"/>
<rect x="301" y="311" width="101" height="137.5" fill="#D4D0C8" />
<rect x="301" y="311" width="101" height="1" fill="#D4D0C8" />
<rect x="301" y="311" width="1" height="137.5" fill="#D4D0C8" />
<rect x="302" y="312" width="99" height="1" fill="#FFFFFF" />
<rect x="302" y="312" width="1" height="135.5" fill="#FFFFFF" />
<rect x="301" y="447.5" width="101" height="1" fill="#404040" />
<rect x="401" y="311" width="1" height="137.5" fill="#404040" />
<rect x="302" y="446.5" width="99" height="1" fill="#808080" />
<rect x="400" y="312" width="1" height="135.5" fill="#808080" />
<rect x="303" y="313" width="97" height="11" fill="url(#gi)" />
<g class="s" transform="translate(303,313)" fill="none" stroke="#000" stroke-linecap="round"><path d="M1.6,6.2 L5.6,1.4 L5.4,6.4" stroke-width="1.6"/><path d="M8.2,1.3 L11.6,1.3" stroke-width="1.5"/><path d="M10.6,1.6 C10.2,5 8.6,8.6 6.8,10.3 L4.6,9.3" stroke-width="1.8"/></g>
<text x="317" y="322.08" font-size="9.5" text-anchor="start" fill="#D0D0D0" font-weight="bold" textLength="36" lengthAdjust="spacingAndGlyphs" font-family="Liberation Sans" >Sonstiges</text>
<rect x="365" y="314" width="10" height="9" fill="#D4D0C8" />
<rect x="365" y="314" width="10" height="1" fill="#FFFFFF" />
<rect x="365" y="314" width="1" height="9" fill="#FFFFFF" />
<rect x="365" y="322" width="10" height="1" fill="#404040" />
<rect x="374" y="314" width="1" height="9" fill="#404040" />
<rect x="366" y="321" width="8" height="1" fill="#808080" />
<rect x="373" y="315" width="1" height="7" fill="#808080" />
<rect x="368" y="319" width="4" height="1.2" fill="#101010" />
<rect x="376" y="314" width="10" height="9" fill="#D4D0C8" />
<rect x="376" y="314" width="10" height="1" fill="#FFFFFF" />
<rect x="376" y="314" width="1" height="9" fill="#FFFFFF" />
<rect x="376" y="322" width="10" height="1" fill="#404040" />
<rect x="385" y="314" width="1" height="9" fill="#404040" />
<rect x="377" y="321" width="8" height="1" fill="#808080" />
<rect x="384" y="315" width="1" height="7" fill="#808080" />
<rect x="378.5" y="316.5" width="5" height="3.5" fill="none" stroke="#909090" stroke-width="1"/>
<rect x="388" y="314" width="11" height="9" fill="#D4D0C8" />
<rect x="388" y="314" width="11" height="1" fill="#FFFFFF" />
<rect x="388" y="314" width="1" height="9" fill="#FFFFFF" />
<rect x="388" y="322" width="11" height="1" fill="#404040" />
<rect x="398" y="314" width="1" height="9" fill="#404040" />
<rect x="389" y="321" width="9" height="1" fill="#808080" />
<rect x="397" y="315" width="1" height="7" fill="#808080" />
<g class="s"><line x1="391.2" y1="316.7" x2="395.8" y2="319.7" stroke="#000" stroke-width="1.3"/><line x1="395.8" y1="316.7" x2="391.2" y2="319.7" stroke="#000" stroke-width="1.3"/></g>
<rect x="389" y="326" width="11" height="119" fill="#E8E6E0" />
<rect x="389" y="331" width="11" height="11" fill="#D4D0C8" />
<rect x="389" y="331" width="11" height="1" fill="#FFFFFF" />
<rect x="389" y="331" width="1" height="11" fill="#FFFFFF" />
<rect x="389" y="341" width="11" height="1" fill="#404040" />
<rect x="399" y="331" width="1" height="11" fill="#404040" />
<rect x="390" y="340" width="9" height="1" fill="#808080" />
<rect x="398" y="332" width="1" height="9" fill="#808080" />
<rect x="389" y="434" width="11" height="11" fill="#D4D0C8" />
<rect x="389" y="434" width="11" height="1" fill="#FFFFFF" />
<rect x="389" y="434" width="1" height="11" fill="#FFFFFF" />
<rect x="389" y="444" width="11" height="1" fill="#404040" />
<rect x="399" y="434" width="1" height="11" fill="#404040" />
<rect x="390" y="443" width="9" height="1" fill="#808080" />
<rect x="398" y="435" width="1" height="9" fill="#808080" />
<polygon points="392.0,338.5 397.0,338.5 394.5,335.5" fill="#808080"/>
<polygon points="392.0,437.5 397.0,437.5 394.5,440.5" fill="#808080"/>
<text x="305" y="338.27" font-size="8.6" text-anchor="start" fill="#000" textLength="60.6" lengthAdjust="spacingAndGlyphs" stroke="#000" stroke-width="0.28" font-family="Liberation Sans" >Cms = 1.092 mm/N</text>
<text x="305" y="346.97" font-size="8.6" text-anchor="start" fill="#000" textLength="50.8" lengthAdjust="spacingAndGlyphs" stroke="#000" stroke-width="0.28" font-family="Liberation Sans" >Mms = 11.982 g</text>
<text x="305" y="355.67" font-size="8.6" text-anchor="start" fill="#000" textLength="53" lengthAdjust="spacingAndGlyphs" stroke="#000" stroke-width="0.28" font-family="Liberation Sans" >Rms = 2.42 kg/s</text>
<text x="305" y="364.37" font-size="8.6" text-anchor="start" fill="#000" textLength="49.5" lengthAdjust="spacingAndGlyphs" stroke="#000" stroke-width="0.28" font-family="Liberation Sans" >BxL = 7.02 N/A</text>
<text x="305" y="373.07" font-size="8.6" text-anchor="start" fill="#000" textLength="36.3" lengthAdjust="spacingAndGlyphs" stroke="#000" stroke-width="0.28" font-family="Liberation Sans" >Pe = 1.2 W</text>
<text x="305" y="381.77" font-size="8.6" text-anchor="start" fill="#000" textLength="37.9" lengthAdjust="spacingAndGlyphs" stroke="#000" stroke-width="0.28" font-family="Liberation Sans" >Qts = 0.339</text>
<text x="305" y="399.07" font-size="8.6" text-anchor="start" fill="#000" textLength="55.0" lengthAdjust="spacingAndGlyphs" stroke="#000" stroke-width="0.28" font-family="Liberation Sans" >VHorn = 102.83 l</text>
<text x="305" y="407.27" font-size="8.6" text-anchor="start" fill="#000" textLength="67.2" lengthAdjust="spacingAndGlyphs" stroke="#000" stroke-width="0.28" font-family="Liberation Sans" >Vgesamt = 104.331 l</text>
<rect x="-3" y="23" width="344" height="282" fill="#D4D0C8" />
<rect x="-3" y="23" width="344" height="1" fill="#D4D0C8" />
<rect x="-3" y="23" width="1" height="282" fill="#D4D0C8" />
<rect x="-2" y="24" width="342" height="1" fill="#FFFFFF" />
<rect x="-2" y="24" width="1" height="280" fill="#FFFFFF" />
<rect x="-3" y="304" width="344" height="1" fill="#404040" />
<rect x="340" y="23" width="1" height="282" fill="#404040" />
<rect x="-2" y="303" width="342" height="1" fill="#808080" />
<rect x="339" y="24" width="1" height="280" fill="#808080" />
<rect x="0" y="25" width="339" height="12" fill="url(#gi)" />
<rect x="0" y="25" width="11" height="12" fill="#C8C4D4" />
<rect x="0" y="28" width="10.5" height="3" fill="#404008" />
<rect x="0" y="29" width="10.5" height="2" fill="#D0D028" />
<rect x="2" y="26" width="3" height="11" fill="#181800" />
<rect x="1.5" y="31" width="2" height="5" fill="#B8C030" />
<rect x="3.5" y="26" width="2" height="2" fill="#000" />
<text x="12" y="34.58" font-size="9.5" text-anchor="start" fill="#D0D0D0" font-weight="bold" textLength="53" lengthAdjust="spacingAndGlyphs" font-family="Liberation Sans" >Dateneingabe</text>
<rect x="304" y="26" width="10" height="10" fill="#D4D0C8" />
<rect x="304" y="26" width="10" height="1" fill="#FFFFFF" />
<rect x="304" y="26" width="1" height="10" fill="#FFFFFF" />
<rect x="304" y="35" width="10" height="1" fill="#404040" />
<rect x="313" y="26" width="1" height="10" fill="#404040" />
<rect x="305" y="34" width="8" height="1" fill="#808080" />
<rect x="312" y="27" width="1" height="8" fill="#808080" />
<rect x="307" y="32" width="4" height="1.2" fill="#101010" />
<rect x="315" y="26" width="10" height="10" fill="#D4D0C8" />
<rect x="315" y="26" width="10" height="1" fill="#FFFFFF" />
<rect x="315" y="26" width="1" height="10" fill="#FFFFFF" />
<rect x="315" y="35" width="10" height="1" fill="#404040" />
<rect x="324" y="26" width="1" height="10" fill="#404040" />
<rect x="316" y="34" width="8" height="1" fill="#808080" />
<rect x="323" y="27" width="1" height="8" fill="#808080" />
<rect x="317.5" y="28.5" width="5" height="4.5" fill="none" stroke="#909090" stroke-width="1"/>
<rect x="327" y="26" width="11" height="10" fill="#D4D0C8" />
<rect x="327" y="26" width="11" height="1" fill="#FFFFFF" />
<rect x="327" y="26" width="1" height="10" fill="#FFFFFF" />
<rect x="327" y="35" width="11" height="1" fill="#404040" />
<rect x="337" y="26" width="1" height="10" fill="#404040" />
<rect x="328" y="34" width="9" height="1" fill="#808080" />
<rect x="336" y="27" width="1" height="8" fill="#808080" />
<g class="s"><line x1="330.2" y1="28.7" x2="334.8" y2="32.7" stroke="#000" stroke-width="1.3"/><line x1="334.8" y1="28.7" x2="330.2" y2="32.7" stroke="#000" stroke-width="1.3"/></g>
<rect x="2" y="54" width="335" height="216" fill="#D4D0C8" />
<rect x="2" y="54" width="335" height="1" fill="#FFFFFF" />
<rect x="2" y="54" width="1" height="216" fill="#FFFFFF" />
<rect x="2" y="269" width="335" height="1" fill="#404040" />
<rect x="336" y="54" width="1" height="216" fill="#404040" />
<rect x="3" y="268" width="333" height="1" fill="#808080" />
<rect x="335" y="55" width="1" height="214" fill="#808080" />
<rect x="3" y="42" width="29" height="13" fill="#D4D0C8" />
<rect x="3" y="42" width="29" height="1" fill="#FFFFFF" />
<rect x="3" y="42" width="1" height="13" fill="#FFFFFF" />
<text x="7" y="51.77" font-size="8.6" text-anchor="start" fill="#000" textLength="21.5" lengthAdjust="spacingAndGlyphs" stroke="#000" stroke-width="0.28" font-family="Liberation Sans" >Treiber</text>
<rect x="7.3" y="53.0" width="4.5" height="0.8" fill="#303030" />
<rect x="62" y="42" width="59" height="13" fill="#D4D0C8" />
<rect x="62" y="42" width="59" height="1" fill="#FFFFFF" />
<rect x="62" y="42" width="1" height="13" fill="#FFFFFF" />
<rect x="120" y="43" width="1" height="12" fill="#404040" />
<rect x="119" y="43" width="1" height="12" fill="#808080" />
<text x="66" y="51.77" font-size="8.6" text-anchor="start" fill="#000" textLength="52" lengthAdjust="spacingAndGlyphs" stroke="#000" stroke-width="0.28" font-family="Liberation Sans" >Frequenzweiche</text>
<rect x="66.3" y="53.0" width="4.5" height="0.8" fill="#303030" />
<rect x="121" y="42" width="32" height="13" fill="#D4D0C8" />
<rect x="121" y="42" width="32" height="1" fill="#FFFFFF" />
<rect x="121" y="42" width="1" height="13" fill="#FFFFFF" />
<rect x="152" y="43" width="1" height="12" fill="#404040" />
<rect x="151" y="43" width="1" height="12" fill="#808080" />
<text x="125" y="51.77" font-size="8.6" text-anchor="start" fill="#000" textLength="25" lengthAdjust="spacingAndGlyphs" stroke="#000" stroke-width="0.28" font-family="Liberation Sans" >Achsen</text>
<rect x="125.3" y="53.0" width="4.5" height="0.8" fill="#303030" />
<rect x="32" y="40" width="31" height="15" fill="#D4D0C8" />
<rect x="32" y="40" width="31" height="1" fill="#FFFFFF" />
<rect x="32" y="40" width="1" height="15" fill="#FFFFFF" />
<rect x="62" y="41" width="1" height="14" fill="#404040" />
<rect x="61" y="41" width="1" height="14" fill="#808080" />
<text x="37" y="49.47" font-size="8.6" text-anchor="start" fill="#000" textLength="15" lengthAdjust="spacingAndGlyphs" stroke="#000" stroke-width="0.28" font-family="Liberation Sans" >Horn</text>
<rect x="37.3" y="50.7" width="4.5" height="0.8" fill="#303030" />
<rect x="33" y="54" width="29" height="1" fill="#D4D0C8" />
<g class="s">
<line x1="30" y1="70.5" x2="139" y2="70.5" stroke="#202020" stroke-width="1.1" />
<polyline points="35.0,67.5 30.3,70.5 35.0,73.5" fill="none" stroke="#202020" stroke-width="1.1" stroke-linejoin="round" />
<line x1="192" y1="70.5" x2="300" y2="70.5" stroke="#202020" stroke-width="1.1" />
<polyline points="295.3,67.5 300.0,70.5 295.3,73.5" fill="none" stroke="#202020" stroke-width="1.1" stroke-linejoin="round" />
</g>
<rect x="150" y="64" width="23" height="11" fill="#FFFFFF" />
<rect x="150" y="64" width="23" height="1" fill="#505050" />
<rect x="150" y="64" width="1" height="11" fill="#505050" />
<rect x="151" y="65" width="22" height="0.6" fill="#C0C0C0" />
<text x="152" y="72.67" font-size="8.6" text-anchor="start" fill="#000" textLength="10.1" lengthAdjust="spacingAndGlyphs" stroke="#000" stroke-width="0.28" font-family="Liberation Sans" >2.2</text>
<text x="175" y="73.47" font-size="8.6" text-anchor="start" fill="#000" textLength="6.1" lengthAdjust="spacingAndGlyphs" stroke="#000" stroke-width="0.28" font-family="Liberation Sans" >m</text>
<g class="s">
<line x1="31" y1="97.3" x2="38" y2="97.3" stroke="#202020" stroke-width="1" />
<polyline points="33.5,95.0 31.0,97.3 33.5,99.6" fill="none" stroke="#202020" stroke-width="1" stroke-linejoin="round" />
<line x1="71" y1="97.3" x2="78" y2="97.3" stroke="#202020" stroke-width="1" />
<polyline points="75.5,95.0 78.0,97.3 75.5,99.6" fill="none" stroke="#202020" stroke-width="1" stroke-linejoin="round" />
</g>
<rect x="41" y="91" width="21" height="11" fill="#FFFFFF" />
<rect x="41" y="91" width="21" height="1" fill="#505050" />
<rect x="41" y="91" width="1" height="11" fill="#505050" />
<rect x="42" y="92" width="20" height="0.6" fill="#C0C0C0" />
<text x="43" y="99.77" font-size="8.6" text-anchor="start" fill="#000" textLength="4.1" lengthAdjust="spacingAndGlyphs" stroke="#000" stroke-width="0.28" font-family="Liberation Sans" >0</text>
<text x="63" y="100.27" font-size="8.6" text-anchor="start" fill="#000" textLength="6.1" lengthAdjust="spacingAndGlyphs" stroke="#000" stroke-width="0.28" font-family="Liberation Sans" >m</text>
<text x="51" y="119.97" font-size="8.6" text-anchor="start" fill="#000" textLength="14" lengthAdjust="spacingAndGlyphs" stroke="#000" stroke-width="0.28" font-family="Liberation Sans" >VAB</text>
<rect x="68" y="111" width="18" height="11" fill="#FFFFFF" />
<rect x="68" y="111" width="18" height="1" fill="#505050" />
<rect x="68" y="111" width="1" height="11" fill="#505050" />
<rect x="69" y="112" width="17" height="0.6" fill="#C0C0C0" />
<text x="70" y="119.77" font-size="8.6" text-anchor="start" fill="#000" textLength="4.1" lengthAdjust="spacingAndGlyphs" stroke="#000" stroke-width="0.28" font-family="Liberation Sans" >0</text>
<text x="87.5" y="119.97" font-size="8.6" text-anchor="start" fill="#000" textLength="1.6" lengthAdjust="spacingAndGlyphs" stroke="#000" stroke-width="0.28" font-family="Liberation Sans" >l</text>
<g style="shape-rendering:geometricPrecision">
<polyline points="300.0,77.0 220.0,110.0 138.0,130.0 30.5,144.8 30.5,157.0 57.5,157.0 57.5,184.3 97.5,184.3 97.5,157.0 298.6,157.0" fill="none" stroke="#383838" stroke-width="1.0" stroke-linejoin="round" />
<polyline points="61.0,184.3 70.0,180.7 86.0,180.7 93.0,184.3" fill="none" stroke="#404040" stroke-width="1" stroke-linejoin="round" />
<rect x="70" y="175.7" width="16" height="5" fill="#000" />
<line x1="111.6" y1="159" x2="111.6" y2="166" stroke="#202020" stroke-width="1" />
<polygon points="111.6,157.5 109.3,161.5 113.9,161.5" fill="#202020"/>
<line x1="111.6" y1="178" x2="111.6" y2="184" stroke="#202020" stroke-width="1" />
<polygon points="111.6,185.5 109.3,181.5 113.9,181.5" fill="#202020"/>
<line x1="17.5" y1="148" x2="17.5" y2="155" stroke="#202020" stroke-width="1" />
<line x1="17.5" y1="151.4" x2="27" y2="151.4" stroke="#202020" stroke-width="1" />
<polygon points="28.5,151.4 25.0,149.0 25.0,153.8" fill="#202020"/>
</g>
<rect x="293" y="101" width="22" height="11" fill="#FFFFFF" />
<rect x="293" y="101" width="22" height="1" fill="#505050" />
<rect x="293" y="101" width="1" height="11" fill="#505050" />
<rect x="294" y="102" width="21" height="0.6" fill="#C0C0C0" />
<text x="295" y="109.57" font-size="8.6" text-anchor="start" fill="#000" textLength="8.1" lengthAdjust="spacingAndGlyphs" stroke="#000" stroke-width="0.28" font-family="Liberation Sans" >60</text>
<text x="317" y="109.47" font-size="8.6" text-anchor="start" fill="#000" textLength="9.7" lengthAdjust="spacingAndGlyphs" stroke="#000" stroke-width="0.28" font-family="Liberation Sans" >cm</text>
<text x="301" y="119.47" font-size="8.6" text-anchor="start" fill="#000" textLength="3.6" lengthAdjust="spacingAndGlyphs" stroke="#000" stroke-width="0.28" font-family="Liberation Sans" >x</text>
<rect x="293" y="121" width="22" height="11" fill="#FFFFFF" />
<rect x="293" y="121" width="22" height="1" fill="#505050" />
<rect x="293" y="121" width="1" height="11" fill="#505050" />
<rect x="294" y="122" width="21" height="0.6" fill="#C0C0C0" />
<text x="295" y="129.57" font-size="8.6" text-anchor="start" fill="#000" textLength="8.1" lengthAdjust="spacingAndGlyphs" stroke="#000" stroke-width="0.28" font-family="Liberation Sans" >30</text>
<text x="317" y="129.97" font-size="8.6" text-anchor="start" fill="#000" textLength="9.7" lengthAdjust="spacingAndGlyphs" stroke="#000" stroke-width="0.28" font-family="Liberation Sans" >cm</text>
<rect x="165" y="131" width="63" height="13" fill="#FFFFFF" />
<rect x="165" y="131" width="63" height="1" fill="#505050" />
<rect x="165" y="131" width="1" height="13" fill="#505050" />
<rect x="166" y="132" width="62" height="0.6" fill="#C0C0C0" />
<text x="167" y="140.47" font-size="8.6" text-anchor="start" fill="#000" textLength="44" lengthAdjust="spacingAndGlyphs" stroke="#000" stroke-width="0.28" font-family="Liberation Sans" >Geometrisch</text>
<rect x="216.5" y="132" width="10.5" height="11" fill="#D4D0C8" />
<rect x="216.5" y="132" width="10.5" height="1" fill="#FFFFFF" />
<rect x="216.5" y="132" width="1" height="11" fill="#FFFFFF" />
<rect x="216.5" y="142" width="10.5" height="1" fill="#404040" />
<rect x="226.0" y="132" width="1" height="11" fill="#404040" />
<rect x="217.5" y="141" width="8.5" height="1" fill="#808080" />
<rect x="225.0" y="133" width="1" height="9" fill="#808080" />
<polygon points="219.2,136.0 224.8,136.0 222.0,139.2" fill="#000"/>
<text x="250" y="136.47" font-size="8.6" text-anchor="start" fill="#000" textLength="8" lengthAdjust="spacingAndGlyphs" stroke="#000" stroke-width="0.28" font-family="Liberation Sans" >B2</text>
<rect x="261" y="128" width="19" height="11" fill="#FFFFFF" />
<rect x="261" y="128" width="19" height="1" fill="#505050" />
<rect x="261" y="128" width="1" height="11" fill="#505050" />
<rect x="262" y="129" width="18" height="0.6" fill="#C0C0C0" />
<text x="263" y="136.57" font-size="8.6" text-anchor="start" fill="#000" textLength="4.1" lengthAdjust="spacingAndGlyphs" stroke="#000" stroke-width="0.28" font-family="Liberation Sans" >0</text>
<text x="47" y="153.47" font-size="8.6" text-anchor="start" fill="#000" textLength="8" lengthAdjust="spacingAndGlyphs" stroke="#000" stroke-width="0.28" font-family="Liberation Sans" >B1</text>
<rect x="58" y="145" width="18" height="11" fill="#FFFFFF" />
<rect x="58" y="145" width="18" height="1" fill="#505050" />
<rect x="58" y="145" width="1" height="11" fill="#505050" />
<rect x="59" y="146" width="17" height="0.6" fill="#C0C0C0" />
<text x="60" y="153.57" font-size="8.6" text-anchor="start" fill="#000" textLength="8.1" lengthAdjust="spacingAndGlyphs" stroke="#000" stroke-width="0.28" font-family="Liberation Sans" >50</text>
<rect x="7" y="157" width="21" height="11" fill="#FFFFFF" />
<rect x="7" y="157" width="21" height="1" fill="#505050" />
<rect x="7" y="157" width="1" height="11" fill="#505050" />
<rect x="8" y="158" width="20" height="0.6" fill="#C0C0C0" />
<text x="9" y="165.57" font-size="8.6" text-anchor="start" fill="#000" textLength="12.2" lengthAdjust="spacingAndGlyphs" stroke="#000" stroke-width="0.28" font-family="Liberation Sans" >184</text>
<text x="30" y="165.97" font-size="8.6" text-anchor="start" fill="#000" textLength="11" lengthAdjust="spacingAndGlyphs" stroke="#000" stroke-width="0.28" font-family="Liberation Sans" >cm²</text>
<text x="18" y="178.97" font-size="8.6" text-anchor="start" fill="#000" textLength="13" lengthAdjust="spacingAndGlyphs" stroke="#000" stroke-width="0.28" font-family="Liberation Sans" >BVK</text>
<rect x="33" y="171" width="20" height="10.5" fill="#FFFFFF" />
<rect x="33" y="171" width="20" height="1" fill="#505050" />
<rect x="33" y="171" width="1" height="10.5" fill="#505050" />
<rect x="34" y="172" width="19" height="0.6" fill="#C0C0C0" />
<text x="35" y="179.37" font-size="8.6" text-anchor="start" fill="#000" textLength="8.1" lengthAdjust="spacingAndGlyphs" stroke="#000" stroke-width="0.28" font-family="Liberation Sans" >50</text>
<rect x="65" y="161" width="20" height="10" fill="#FFFFFF" />
<rect x="65" y="161" width="20" height="1" fill="#505050" />
<rect x="65" y="161" width="1" height="10" fill="#505050" />
<rect x="66" y="162" width="19" height="0.6" fill="#C0C0C0" />
<text x="67" y="168.97" font-size="8.6" text-anchor="start" fill="#000" textLength="10.1" lengthAdjust="spacingAndGlyphs" stroke="#000" stroke-width="0.28" font-family="Liberation Sans" >1.5</text>
<text x="87.5" y="168.97" font-size="8.6" text-anchor="start" fill="#000" textLength="1.6" lengthAdjust="spacingAndGlyphs" stroke="#000" stroke-width="0.28" font-family="Liberation Sans" >l</text>
<rect x="105" y="166" width="18" height="10.5" fill="#FFFFFF" />
<rect x="105" y="166" width="18" height="1" fill="#505050" />
<rect x="105" y="166" width="1" height="10.5" fill="#505050" />
<rect x="106" y="167" width="17" height="0.6" fill="#C0C0C0" />
<text x="106.5" y="174.37" font-size="8.6" text-anchor="start" fill="#000" textLength="10.1" lengthAdjust="spacingAndGlyphs" stroke="#000" stroke-width="0.28" font-family="Liberation Sans" >0.1</text>
<text x="124.5" y="174.27" font-size="8.6" text-anchor="start" fill="#000" textLength="6.1" lengthAdjust="spacingAndGlyphs" stroke="#000" stroke-width="0.28" font-family="Liberation Sans" >m</text>
<rect x="256.5" y="171.5" width="69" height="73" fill="none" stroke="#808080"/>
<rect x="257.5" y="172.5" width="69" height="73" fill="none" stroke="#FFFFFF" opacity="0.8"/>
<rect x="259" y="167" width="40" height="9" fill="#D4D0C8" />
<text x="261" y="174.97" font-size="8.6" text-anchor="start" fill="#000" textLength="36" lengthAdjust="spacingAndGlyphs" stroke="#000" stroke-width="0.28" font-family="Liberation Sans" >Aufstellung</text>
<rect x="261" y="180" width="59" height="13" fill="#FFFFFF" />
<rect x="261" y="180" width="59" height="1" fill="#505050" />
<rect x="261" y="180" width="1" height="13" fill="#505050" />
<rect x="262" y="181" width="58" height="0.6" fill="#C0C0C0" />
<text x="263" y="189.47" font-size="8.6" text-anchor="start" fill="#000" textLength="17" lengthAdjust="spacingAndGlyphs" stroke="#000" stroke-width="0.28" font-family="Liberation Sans" >Ecke</text>
<rect x="308.5" y="181" width="10.5" height="11" fill="#D4D0C8" />
<rect x="308.5" y="181" width="10.5" height="1" fill="#FFFFFF" />
<rect x="308.5" y="181" width="1" height="11" fill="#FFFFFF" />
<rect x="308.5" y="191" width="10.5" height="1" fill="#404040" />
<rect x="318.0" y="181" width="1" height="11" fill="#404040" />
<rect x="309.5" y="190" width="8.5" height="1" fill="#808080" />
<rect x="317.0" y="182" width="1" height="9" fill="#808080" />
<polygon points="311.2,185.0 316.8,185.0 314.0,188.2" fill="#000"/>
<text x="284" y="206.97" font-size="8.6" text-anchor="end" fill="#000" textLength="16" lengthAdjust="spacingAndGlyphs" stroke="#000" stroke-width="0.28" font-family="Liberation Sans" >Abst.</text>
<rect x="287" y="198" width="21" height="11" fill="#FFFFFF" />
<rect x="287" y="198" width="21" height="1" fill="#505050" />
<rect x="287" y="198" width="1" height="11" fill="#505050" />
<rect x="288" y="199" width="20" height="0.6" fill="#C0C0C0" />
<text x="289" y="206.57" font-size="8.6" text-anchor="start" fill="#000" textLength="4.1" lengthAdjust="spacingAndGlyphs" stroke="#000" stroke-width="0.28" font-family="Liberation Sans" >3</text>
<text x="310" y="206.97" font-size="8.6" text-anchor="start" fill="#000" textLength="6.1" lengthAdjust="spacingAndGlyphs" stroke="#000" stroke-width="0.28" font-family="Liberation Sans" >m</text>
<text x="284" y="220.57" font-size="8.6" text-anchor="end" fill="#000" textLength="13" lengthAdjust="spacingAndGlyphs" stroke="#000" stroke-width="0.28" font-family="Liberation Sans" >dL1</text>
<rect x="287" y="212" width="21" height="11" fill="#FFFFFF" />
<rect x="287" y="212" width="21" height="1" fill="#505050" />
<rect x="287" y="212" width="1" height="11" fill="#505050" />
<rect x="288" y="213" width="20" height="0.6" fill="#C0C0C0" />
<text x="289" y="220.37" font-size="8.6" text-anchor="start" fill="#000" textLength="15" lengthAdjust="spacingAndGlyphs" stroke="#000" stroke-width="0.28" font-family="Liberation Sans" >0.75</text>
<text x="310" y="220.57" font-size="8.6" text-anchor="start" fill="#000" textLength="6.1" lengthAdjust="spacingAndGlyphs" stroke="#000" stroke-width="0.28" font-family="Liberation Sans" >m</text>
<text x="284" y="234.77" font-size="8.6" text-anchor="end" fill="#000" textLength="13" lengthAdjust="spacingAndGlyphs" stroke="#000" stroke-width="0.28" font-family="Liberation Sans" >dL2</text>
<rect x="287" y="226" width="21" height="11" fill="#D4D0C8" />
<rect x="287" y="226" width="21" height="1" fill="#505050" />
<rect x="287" y="226" width="1" height="11" fill="#505050" />
<rect x="288" y="227" width="20" height="0.6" fill="#C0C0C0" />
<text x="289" y="234.57" font-size="8.6" text-anchor="start" fill="#404040" textLength="4.1" lengthAdjust="spacingAndGlyphs" font-family="Liberation Sans" >0</text>
<text x="310" y="234.77" font-size="8.6" text-anchor="start" fill="#000" textLength="6.1" lengthAdjust="spacingAndGlyphs" stroke="#000" stroke-width="0.28" font-family="Liberation Sans" >m</text>
<rect x="9" y="249" width="221" height="12" fill="#FFFFFF" />
<rect x="9" y="249" width="221" height="1" fill="#505050" />
<rect x="9" y="249" width="1" height="12" fill="#505050" />
<rect x="10" y="250" width="220" height="0.6" fill="#C0C0C0" />
<text x="11" y="257.97" font-size="8.6" text-anchor="start" fill="#000" textLength="30" lengthAdjust="spacingAndGlyphs" stroke="#000" stroke-width="0.28" font-family="Liberation Sans" >Horn Info</text>
<rect x="1.5" y="282.5" width="119" height="10" fill="none" stroke="#808080"/>
<rect x="2" y="292" width="119" height="1" fill="#FFFFFF" />
<rect x="120" y="283" width="1" height="10" fill="#FFFFFF" />
<rect x="218.5" y="276.5" width="10" height="9.5" fill="#000000" />
<rect x="230.5" y="277.7" width="7.2" height="7" fill="#FF0000" />
<rect x="220" y="288.3" width="7.2" height="7" fill="#008000" />
<rect x="230.5" y="288.3" width="7.2" height="7" fill="#0000FF" />
<rect x="245" y="276" width="21" height="20" fill="#D4D0C8" />
<rect x="245" y="276" width="21" height="1" fill="#FFFFFF" />
<rect x="245" y="276" width="1" height="20" fill="#FFFFFF" />
<rect x="245" y="295" width="21" height="1" fill="#404040" />
<rect x="265" y="276" width="1" height="20" fill="#404040" />
<rect x="246" y="294" width="19" height="1" fill="#808080" />
<rect x="264" y="277" width="1" height="18" fill="#808080" />
<g style="shape-rendering:geometricPrecision">
<line x1="250.5" y1="281.5" x2="259.5" y2="291.5" stroke="#000" stroke-width="1.5" />
<line x1="259.5" y1="281.5" x2="250.5" y2="291.5" stroke="#000" stroke-width="1.5" />
</g>
<rect x="270" y="276" width="67" height="20" fill="#D4D0C8" />
<rect x="270" y="276" width="67" height="1" fill="#FFFFFF" />
<rect x="270" y="276" width="1" height="20" fill="#FFFFFF" />
<rect x="270" y="295" width="67" height="1" fill="#404040" />
<rect x="336" y="276" width="1" height="20" fill="#404040" />
<rect x="271" y="294" width="65" height="1" fill="#808080" />
<rect x="335" y="277" width="1" height="18" fill="#808080" />
<text x="303" y="289.17" font-size="8.6" text-anchor="middle" fill="#000" textLength="15" lengthAdjust="spacingAndGlyphs" stroke="#000" stroke-width="0.28" font-family="Liberation Sans" >Start</text>
<rect x="296" y="290.8" width="4" height="0.8" fill="#303030" /></svg>
</body></html>
